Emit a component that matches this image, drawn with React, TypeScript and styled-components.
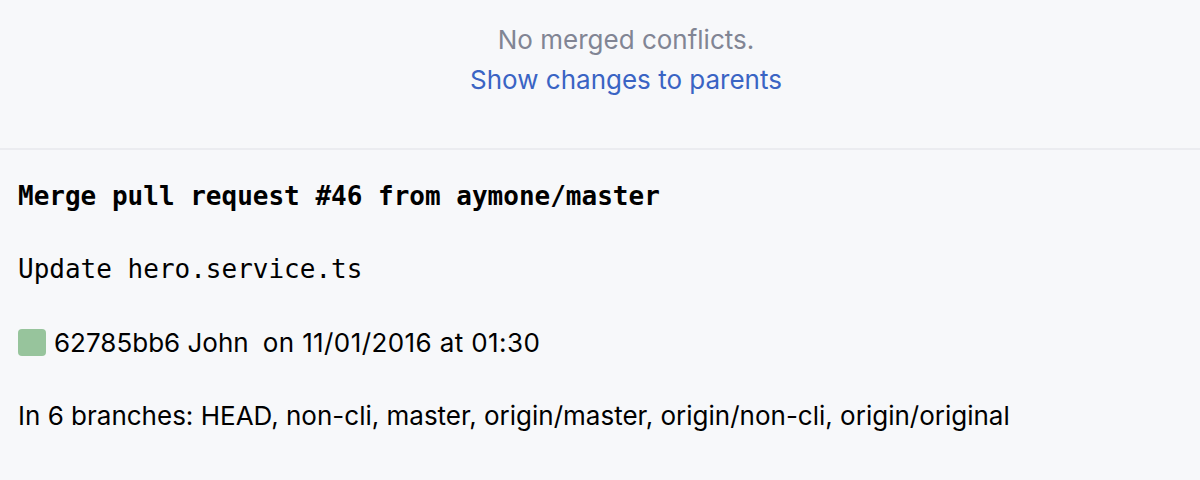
import React from 'react';
import styled, { createGlobalStyle } from 'styled-components';

const GlobalStyle = createGlobalStyle`
  html, body {
    margin: 0;
    padding: 0;
    background: #f7f8fa;
  }
  body {
    font-family: Inter, "Noto Sans", sans-serif;
  }
`;

const Page = styled.div`
  width: 1200px;
  height: 480px;
  background: #f7f8fa;
  overflow: hidden;
`;

const ConflictsPanel = styled.div`
  display: flex;
  flex-direction: column;
  align-items: center;
  gap: 8px;
  height: 150px;
  box-sizing: border-box;
  padding: 24px 0 0 52px;
  border-bottom: 2px solid #ebecf0;
`;

const Hint = styled.div`
  font-size: 26px;
  line-height: 32px;
  color: #818594;
`;

const ParentsLink = styled.a`
  font-size: 26px;
  line-height: 32px;
  color: #3a64c4;
  text-decoration: none;
  cursor: pointer;
`;

const Details = styled.div`
  display: flex;
  flex-direction: column;
  gap: 40px;
  padding: 30px 18px 0;
`;

const Mono = styled.div<{ $bold?: boolean }>`
  font-family: "DejaVu Sans Mono", "Liberation Mono", monospace;
  font-size: 26px;
  line-height: 33px;
  font-weight: ${p => (p.$bold ? 700 : 400)};
  color: #000;
`;

const MetaRow = styled.div`
  display: flex;
  align-items: center;
  font-size: 26px;
  line-height: 33px;
  color: #000;
`;

const AuthorSwatch = styled.span<{ $color: string }>`
  width: 28px;
  height: 27px;
  border-radius: 4px;
  background: ${p => p.$color};
  margin-right: 8px;
`;

const Gap = styled.span`
  width: 14px;
`;

const Date = styled.span`
  letter-spacing: 0.4px;
`;

const branches = ['HEAD', 'non-cli', 'master', 'origin/master', 'origin/non-cli', 'origin/original'];

export default function App() {
  return (
    <Page>
      <GlobalStyle />
      <ConflictsPanel>
        <Hint>No merged conflicts.</Hint>
        <ParentsLink>Show changes to parents</ParentsLink>
      </ConflictsPanel>
      <Details>
        <Mono $bold>Merge pull request #46 from aymone/master</Mono>
        <Mono>Update hero.service.ts</Mono>
        <MetaRow>
          <AuthorSwatch $color="#97c49c" />
          62785bb6 John
          <Gap />
          <Date>on 11/01/2016 at 01:30</Date>
        </MetaRow>
        <MetaRow>In {branches.length} branches: {branches.join(', ')}</MetaRow>
      </Details>
    </Page>
  );
}
